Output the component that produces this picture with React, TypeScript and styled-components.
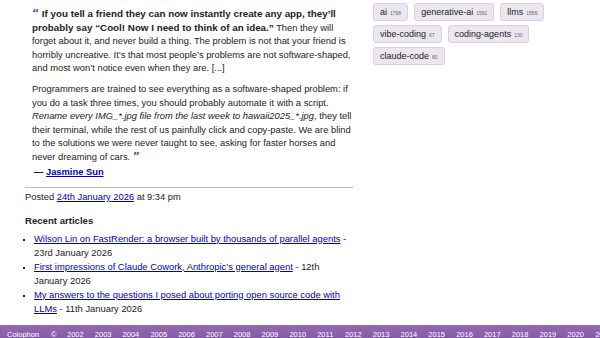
import React from "react";
import styled, { createGlobalStyle } from "styled-components";

const Global = createGlobalStyle`
  html, body { margin: 0; padding: 0; background: #fff; }
  body { font-family: "Liberation Sans", Arial, Helvetica, sans-serif; color: #222; overflow: hidden; }
`;

const Page = styled.div`
  width: 600px;
  height: 338px;
  overflow: hidden;
  display: flex;
  flex-direction: column;
`;

const Main = styled.div`
  flex: none;
  display: flex;
  gap: 20px;
  padding: 8px 0 0 25px;
`;

const Left = styled.div`
  width: 328px;
  flex: none;
`;

const Quote = styled.blockquote`
  margin: 0;
  padding-left: 7px;
  font-size: 9.35px;
  line-height: 13.5px;
`;

const QP = styled.p`
  margin: 0 0 7.5px 0;
`;

const Strong = styled.strong`
  font-size: 9.8px;
  line-height: 10px;
`;

const Mark = styled.span`
  color: #7b3fc4;
  font-family: "DejaVu Sans", sans-serif;
  font-weight: bold;
  font-size: 11px;
  line-height: 0;
`;

const Cite = styled.div`
  font-weight: bold;
  padding-left: 2px;
  margin-top: -6px;
`;

const A = styled.a<{ $bold?: boolean }>`
  color: #0000c8;
  text-decoration: underline;
  font-weight: ${(p) => (p.$bold ? "bold" : "normal")};
`;

const Rule = styled.hr`
  border: 0;
  border-top: 1px solid #c3b3d3;
  margin: 8px 0 0 0;
`;

const Posted = styled.p`
  font-size: 9.35px;
  line-height: 13.5px;
  margin: 3px 0 0 0;
`;

const H3 = styled.h3`
  font-size: 9.6px;
  line-height: 14px;
  margin: 9px 0 4px 0;
`;

const List = styled.ul`
  margin: 0;
  padding-left: 9px;
  list-style: square;
  font-size: 9.4px;
  line-height: 14px;
`;

const Item = styled.li`
  margin: 0;
  &::marker { font-size: 7px; }
`;

const Right = styled.div`
  width: 200px;
  display: flex;
  flex-wrap: wrap;
  align-content: flex-start;
  gap: 4px 6px;
  margin-top: -5px;
`;

const Tag = styled.a`
  display: inline-flex;
  align-items: baseline;
  gap: 3px;
  height: 18px;
  box-sizing: border-box;
  padding: 3px 6px 0 6px;
  background: #ebe6ef;
  border: 1px solid #d9d1e0;
  border-radius: 3px;
  font-size: 9px;
  color: #222;
  text-decoration: none;
`;

const Count = styled.span`
  font-size: 5px;
  color: #666;
`;

const Footer = styled.div`
  flex: none;
  height: 30px;
  margin-top: 9px;
  background: linear-gradient(#936ab2, #72479a);
  display: flex;
  padding: 5px 0 0 7px;
  box-sizing: border-box;
  font-size: 7.5px;
  color: #fff;
  white-space: nowrap;
`;

const FItem = styled.span<{ $w: number }>`
  flex: none;
  display: inline-block;
  width: ${(p) => `${p.$w}px`};
  color: #fff;
`;

const years = Array.from({ length: 20 }, (_, i) => 2002 + i);

const tags: [string, string][] = [
  ["ai", "1798"],
  ["generative-ai", "1591"],
  ["llms", "1556"],
  ["vibe-coding", "67"],
  ["coding-agents", "130"],
  ["claude-code", "80"],
];

export default function App() {
  return (
    <Page>
      <Global />
      <Main>
        <Left>
          <Quote>
            <QP>
              <Mark>“</Mark>{" "}
              <Strong>
                If you tell a friend they can now instantly create any app, they’ll probably say “Cool! Now I need to think of an idea.”
              </Strong>{" "}
              Then they will forget about it, and never build a thing. The problem is not that your friend is horribly uncreative. It’s that most people’s problems are not software-shaped, and most won’t notice even when they are. [...]
            </QP>
            <QP>
              Programmers are trained to see everything as a software-shaped problem: if you do a task three times, you should probably automate it with a script.{" "}
              <em>Rename every IMG_*.jpg file from the last week to hawaii2025_*.jpg</em>, they tell their terminal, while the rest of us painfully click and copy-paste. We are blind to the solutions we were never taught to see, asking for faster horses and never dreaming of cars. <Mark>”</Mark>
            </QP>
            <Cite>
              — <A $bold href="#">Jasmine Sun</A>
            </Cite>
          </Quote>
          <Rule />
          <Posted>
            Posted <A href="#">24th January 2026</A> at 9:34 pm
          </Posted>
          <H3>Recent articles</H3>
          <List>
            <Item>
              <A href="#">Wilson Lin on FastRender: a browser built by thousands of parallel agents</A> - 23rd January 2026
            </Item>
            <Item>
              <A href="#">First impressions of Claude Cowork, Anthropic’s general agent</A> - 12th January 2026
            </Item>
            <Item>
              <A href="#">My answers to the questions I posed about porting open source code with LLMs</A> - 11th January 2026
            </Item>
          </List>
        </Left>
        <Right>
          {tags.map(([t, c]) => (
            <Tag key={t} href="#">
              {t} <Count>{c}</Count>
            </Tag>
          ))}
        </Right>
      </Main>
      <Footer>
        <FItem $w={44}>Colophon</FItem>
        <FItem $w={16}>©</FItem>
        {years.map((y) => (
          <FItem key={y} $w={27.8}>{y}</FItem>
        ))}
      </Footer>
    </Page>
  );
}
